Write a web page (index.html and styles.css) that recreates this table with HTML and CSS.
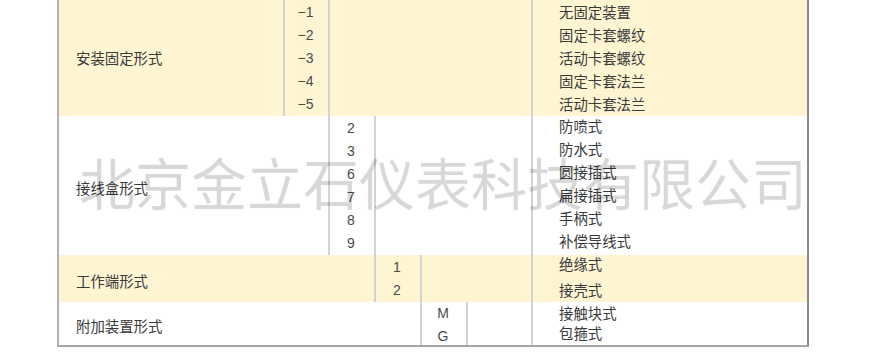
FILE: index.html
```html
<!DOCTYPE html>
<html lang="zh-CN">
<head>
<meta charset="utf-8">
<title>型号选择</title>
<link rel="stylesheet" href="styles.css">
</head>
<body>
<div class="sheet">
  <div class="spec">
    <div class="cell label row1 span-1">安装固定形式</div>
    <div class="cell code row1 col-2"><div>−1</div><div>−2</div><div>−3</div><div>−4</div><div>−5</div></div>
    <div class="cell blank row1 span-4"></div>
    <div class="cell desc row1"><div class="lines">无固定装置<br>固定卡套螺纹<br>活动卡套螺纹<br>固定卡套法兰<br>活动卡套法兰</div></div>

    <div class="cell label row2 span-2">接线盒形式</div>
    <div class="cell code row2"><div>2</div><div>3</div><div>6</div><div>7</div><div>8</div><div>9</div></div>
    <div class="cell blank row2 span-3"></div>
    <div class="cell desc row2"><div class="lines shift-up">防喷式<br>防水式<br>圆接插式<br>扁接插式<br>手柄式<br>补偿导线式</div></div>

    <div class="cell label row3 span-3">工作端形式</div>
    <div class="cell code row3"><div>1</div><div>2</div></div>
    <div class="cell blank row3 span-2"></div>
    <div class="cell desc row3"><div class="lines wide">绝缘式<br>接壳式</div></div>

    <div class="cell label row4 span-4">附加装置形式</div>
    <div class="cell code row4"><div>M</div><div>G</div></div>
    <div class="cell blank row4 span-1"></div>
    <div class="cell desc row4"><div class="lines tight">接触块式<br>包箍式</div></div>
  </div>
  <div class="watermark">北京金立石仪表科技有限公司</div>
</div>
</body>
</html>
```
FILE: styles.css
```css
html, body {
  margin: 0;
  padding: 0;
  background: #ffffff;
}

body {
  font-family: "Noto Sans CJK SC", "Noto Sans", sans-serif;
  color: #3a3a3a;
}

.sheet {
  position: relative;
  width: 752px;
  margin-left: 57px;
}

.spec {
  display: grid;
  grid-template-columns: 224px 45px 46px 46px 46px 65px 276px;
  grid-template-rows: 116px 139px 47px 43px;
  border-left: 2px solid rgba(0, 0, 0, 0.3);
  border-right: 2px solid rgba(0, 0, 0, 0.45);
  border-bottom: 2px solid rgba(0, 0, 0, 0.35);
}

.cell {
  box-sizing: border-box;
  min-width: 0;
}

.row1, .row3 { background: #fff5d3; }
.row2, .row4 { background: #ffffff; }

.span-1 { grid-column: span 1; }
.span-2 { grid-column: span 2; }
.span-3 { grid-column: span 3; }
.span-4 { grid-column: span 4; }

.label {
  display: flex;
  align-items: center;
  padding-left: 17px;
  padding-top: 4px;
  font-size: 14.4px;
  line-height: 20px;
}

.label.row1 { padding-top: 0; }

.code {
  border-left: 2px solid #d3d3d3;
  text-align: center;
  font-family: "Liberation Sans", "Noto Sans CJK SC", sans-serif;
  font-size: 14px;
  line-height: 23px;
  color: #4a4a4a;
  padding-top: 1px;
  padding-right: 2px;
}

.code.row4 { padding-top: 0; }

.blank {
  border-left: 2px solid #d3d3d3;
}

.desc {
  border-left: 2px solid #d3d3d3;
  padding-left: 26px;
  font-size: 14.4px;
  line-height: 23px;
}

.lines.shift-up { margin-top: -2px; }

.lines.wide {
  line-height: 25.5px;
  margin-top: -4px;
}

.lines.tight {
  line-height: 20px;
  margin-top: 1px;
}

.watermark {
  position: absolute;
  left: 22px;
  top: 153px;
  font-family: "Noto Sans CJK SC", sans-serif;
  font-size: 56px;
  line-height: 56px;
  white-space: nowrap;
  color: rgba(0, 0, 0, 0.07);
  text-shadow: 0 0 1px rgba(0, 0, 0, 0.09);
  pointer-events: none;
}
```
